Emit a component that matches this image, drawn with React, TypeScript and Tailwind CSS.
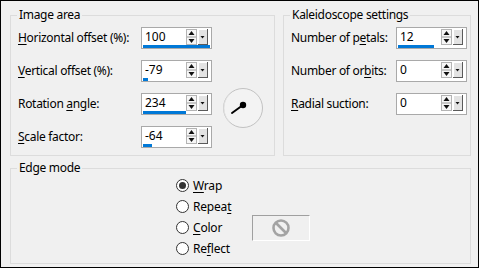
import React from 'react'

const font = { fontFamily: '"Segoe UI", "Noto Sans", "Open Sans", sans-serif' }

function Spinner() {
  return (
    <svg width="22" height="16" viewBox="0 0 22 16" className="shrink-0">
      <rect x="0.5" y="0.5" width="10" height="15" fill="#f7f7f7" stroke="#b4b4b4" />
      <line x1="1" y1="8" x2="10" y2="8" stroke="#9a9a9a" />
      <path d="M5.5 2 L8.5 6 L2.5 6 Z" fill="#111" />
      <path d="M2.5 10 L8.5 10 L5.5 14 Z" fill="#111" />
      <rect x="12" y="0" width="9" height="16" fill="#e3e3e3" />
      <line x1="12.5" y1="0" x2="12.5" y2="16" stroke="#ffffff" />
      <line x1="12" y1="0.5" x2="21" y2="0.5" stroke="#ffffff" />
      <line x1="21.5" y1="0" x2="21.5" y2="16" stroke="#5a5a5a" />
      <line x1="12" y1="15.5" x2="22" y2="15.5" stroke="#5a5a5a" />
      <path d="M14.5 7 L18.5 7 L16.5 9.5 Z" fill="#111" />
    </svg>
  )
}

function SpinBox({ value, bar }: { value: string; bar: number }) {
  return (
    <div className="w-[71px] h-[22px] border border-[#a9a9a9] bg-white flex flex-col shrink-0">
      <div className="flex-1 flex items-center pl-[3px] pr-[3px]">
        <span className="flex-1 text-[12px] leading-none text-black">{value}</span>
        <Spinner />
      </div>
      <div className="h-[3px] pl-px">
        <div className="h-[3px] bg-[#0078d7]" style={{ width: bar }} />
      </div>
    </div>
  )
}

function Row({ pre = '', u, rest, value, bar, labelW }: { pre?: string; u: string; rest: string; value: string; bar: number; labelW: string }) {
  return (
    <div className="flex items-center h-[22px]">
      <div className={`${labelW} text-[12px] tracking-[-0.3px] text-black whitespace-nowrap`}>
        {pre}<u className="underline-offset-[2px]">{u}</u>{rest}
      </div>
      <SpinBox value={value} bar={bar} />
    </div>
  )
}

function Dial() {
  return (
    <svg width="42" height="42" viewBox="0 0 42 42" className="shrink-0 ml-[10px] -mt-[6px] -mb-[14px]">
      <circle cx="21" cy="21" r="19.5" fill="#f3f3f3" stroke="#c2c2c2" />
      <path d="M7.5 34.5 A19 19 0 0 1 7.5 7.5" fill="none" stroke="#e2e2e2" strokeWidth="1" />
      <line x1="21" y1="18" x2="10" y2="26" stroke="#000" strokeWidth="2" strokeLinecap="round" />
      <circle cx="21" cy="18" r="3.2" fill="#000" />
    </svg>
  )
}

function Radio({ checked, pre = '', u, rest, children }: { checked?: boolean; pre?: string; u: string; rest: string; children?: React.ReactNode }) {
  return (
    <div className="flex items-center h-[21px]">
      <span className="w-[13px] h-[13px] rounded-full border border-[#333] bg-white flex items-center justify-center shrink-0">
        {checked && <span className="w-[7px] h-[7px] rounded-full bg-[#333]" />}
      </span>
      <span className="ml-[4px] text-[12px] tracking-[-0.2px] text-black">
        {pre}<u className="underline-offset-[2px]">{u}</u>{rest}
      </span>
      {children}
    </div>
  )
}

export default function App() {
  return (
    <div style={font} className="w-[479px] h-[268px] border border-black bg-[#f0f0f0] pl-[9px] pr-[7px] pt-[6px] flex flex-col">
      <div className="flex gap-[8px]">
        <fieldset className="w-[265px] border border-[#dcdcdc] pl-[6px] pr-0 pb-[7px] h-[149px]">
          <legend className="px-[2px] text-[12px] tracking-[-0.3px] leading-[16px] text-black">Image area</legend>
          <div className="flex flex-col gap-[11px] pt-[4px] pl-px">
            <Row labelW="w-[123px]" u="H" rest="orizontal offset (%):" value="100" bar={67} />
            <Row labelW="w-[123px]" u="V" rest="ertical offset (%):" value="-79" bar={5} />
            <div className="flex items-center h-[22px]">
              <div className="w-[123px] text-[12px] tracking-[-0.3px] text-black whitespace-nowrap">
                Rotation <u className="underline-offset-[2px]">a</u>ngle:
              </div>
              <SpinBox value="234" bar={43} />
              <Dial />
            </div>
            <Row labelW="w-[123px]" u="S" rest="cale factor:" value="-64" bar={9} />
          </div>
        </fieldset>
        <fieldset className="w-[188px] border border-[#dcdcdc] pl-[6px] pb-[7px] h-[149px]">
          <legend className="px-[2px] text-[12px] tracking-[-0.3px] leading-[16px] text-black">Kaleidoscope settings</legend>
          <div className="flex flex-col gap-[11px] pt-[4px] pl-px">
            <Row labelW="w-[105px]" pre="Number of p" u="e" rest="tals:" value="12" bar={36} />
            <Row labelW="w-[105px]" pre="Number of or" u="b" rest="its:" value="0" bar={0} />
            <Row labelW="w-[105px]" u="R" rest="adial suction:" value="0" bar={0} />
          </div>
        </fieldset>
      </div>
      <fieldset className="mt-[4px] w-[461px] border border-[#dcdcdc] pl-[6px] h-[104px]">
        <legend className="px-[2px] text-[12px] tracking-[-0.3px] leading-[16px] text-black">Edge mode</legend>
        <div className="flex flex-col pl-[159px] -mt-[1px]">
          <Radio checked u="W" rest="rap" />
          <Radio pre="Repea" u="t" rest="" />
          <Radio u="C" rest="olor">
            <div className="ml-[30px] -my-[3px] w-[58px] h-[26px] border border-t-[#a0a0a0] border-l-[#a0a0a0] border-r-white border-b-white flex items-center justify-center shrink-0">
              <svg width="20" height="20" viewBox="0 0 20 20">
                <circle cx="10" cy="10" r="7.5" fill="none" stroke="#a3a3a3" strokeWidth="2.6" />
                <line x1="5" y1="5" x2="15" y2="15" stroke="#a3a3a3" strokeWidth="2.6" />
              </svg>
            </div>
          </Radio>
          <Radio pre="Re" u="f" rest="lect" />
        </div>
      </fieldset>
    </div>
  )
}
